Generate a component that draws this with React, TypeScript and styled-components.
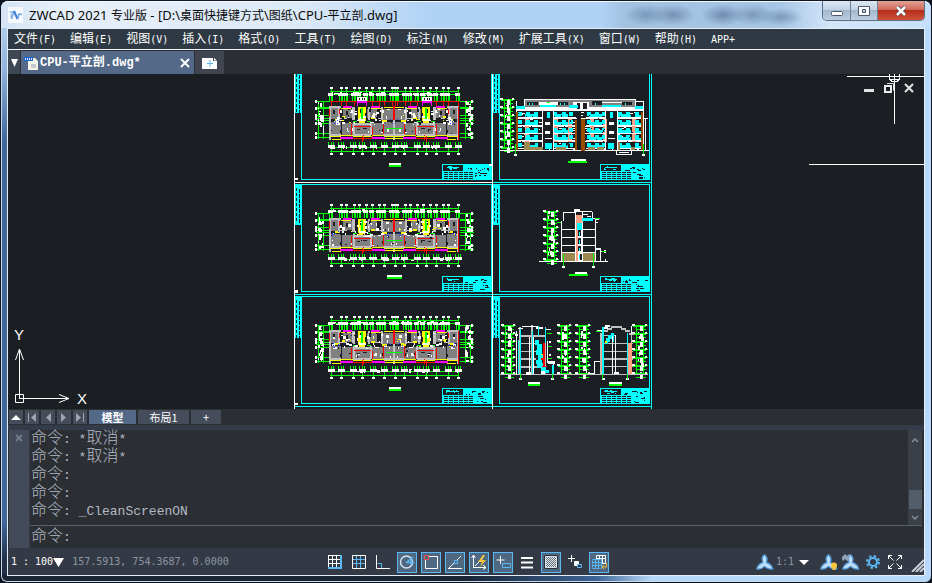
import React from "react";
import styled, { createGlobalStyle, css } from "styled-components";

/* ---------- palette ---------- */
const C = {
  canvas: "#1b1e22",
  panel: "#2b2e32",
  menu: "#2e3943",
  status: "#333a45",
  button: "#454c5a",
  active: "#536987",
  sky: "#5cb8f5",
  cyan: "#00ffff",
  green: "#00ff00",
  white: "#ffffff",
  red: "#ff0000",
  yellow: "#ffff00",
  magenta: "#ff00ff",
  blue: "#1a3cff",
  gray: "#808080",
  light: "#c0c0c0",
  brown: "#994c00",
  olive: "#9c8850",
  salmon: "#ff9f7f",
};

const cjk = `"Noto Sans CJK SC", sans-serif`;
const mono = `"DejaVu Sans Mono", ${cjk}`;

/* ---------- drawing helpers ---------- */
type Cell = [number, number, number, number];

const toPath = (cells: Cell[]) =>
  cells.map(([x, y, w, h]) => `M${x} ${y}h${w}v${h}h${-w}z`).join("");

const Fill = ({ c, cells }: { c: string; cells: Cell[] }) => (
  <path fill={c} d={toPath(cells)} />
);

const random = (seed: number) => {
  let s = seed;
  return () => {
    s = (s * 16807) % 2147483647;
    return s / 2147483647;
  };
};

const scatter = (
  seed: number,
  count: number,
  x: number,
  y: number,
  w: number,
  h: number,
  maxW = 3,
  maxH = 2
): Cell[] => {
  const r = random(seed);
  return Array.from({ length: count }, () => {
    const cw = 1 + Math.floor(r() * maxW);
    const ch = 1 + Math.floor(r() * maxH);
    return [
      x + Math.floor(r() * (w - cw + 1)),
      y + Math.floor(r() * (h - ch + 1)),
      cw,
      ch,
    ] as Cell;
  });
};

/* ---------- sheets ---------- */
const Sheet = ({
  x,
  y,
  w,
  bottom,
  stripTo,
  seed,
}: {
  x: number;
  y: number;
  w: number;
  bottom: number;
  stripTo: number;
  seed: number;
}) => {
  const right = x + w;
  const bx = right - 49;
  const by = bottom - 16;
  const holes: Cell[] = [];
  for (let i = y + 4; i < stripTo - 2; i += 5) {
    holes.push([x - 5, i, 1, 3], [x - 2, i + 1, 1, 4]);
  }
  const grid: Cell[] = [];
  for (let row = 0; row < 4; row++) {
    for (let col = 0; col < 6; col++) {
      grid.push([bx + 2 + col * 5, by + 8 + row * 2, 4, 1]);
    }
  }
  return (
    <g>
      <Fill
        c={C.cyan}
        cells={[
          [x, y, 1, bottom - y],
          [right, y, 1, bottom - y],
          [x, y, w, 1],
          [x, bottom - 1, w + 1, 1],
          [x - 6, y, 6, stripTo - y],
          [bx, by, 49, 16],
        ]}
      />
      <Fill c={C.canvas} cells={holes} />
      <Fill
        c={C.canvas}
        cells={[
          [bx + 1, by + 1, 20, 6],
          ...grid,
          ...scatter(seed, 12, bx + 23, by + 3, 25, 4, 3, 1),
          ...scatter(seed + 3, 8, bx + 33, by + 8, 14, 7, 4, 1),
        ]}
      />
      <Fill
        c={C.cyan}
        cells={[[bx + 5, by + 3, 12, 1], ...scatter(seed + 9, 9, bx + 4, by + 2, 13, 4, 3, 1)]}
      />
    </g>
  );
};

/* ---------- floor plan ---------- */
const topAxes = [
  331, 341, 346, 354, 359, 366, 372, 379, 384, 392, 395, 397, 405, 410, 417,
  423, 430, 436, 443, 448, 458,
];
const bottomAxes = [
  331, 341, 353, 362, 373, 384, 395, 404, 417, 426, 436, 448, 458,
];

const halfUnit: [string, Cell[]][] = [
  [
    C.gray,
    [
      [2, 2, 9, 11], [14, 3, 9, 9], [38, 3, 10, 9], [53, 3, 11, 11], [1, 16, 11, 12],
      [13, 17, 11, 12], [24, 19, 18, 9], [43, 17, 11, 12], [55, 16, 12, 13],
    ],
  ],
  [
    C.light,
    [
      [0, 0, 2, 34], [0, 0, 12, 2], [9, 2, 2, 13], [23, 1, 3, 14], [24, 15, 2, 15],
      [39, 1, 2, 14], [41, 15, 2, 14], [52, 1, 2, 13], [64, 0, 2, 34], [0, 28, 12, 2],
      [25, 28, 17, 2], [54, 28, 12, 2], [26, 17, 15, 2], [10, 12, 8, 1], [44, 12, 10, 1],
    ],
  ],
  [
    C.canvas,
    [
      [12, 14, 15, 2], [39, 14, 15, 2], [4, 4, 2, 4], [17, 5, 2, 4], [48, 5, 2, 5],
      [28, 23, 3, 1], [34, 22, 4, 1], [11, 24, 2, 3], [53, 23, 2, 3], [40, 3, 2, 3],
    ],
  ],
  [
    C.red,
    [
      [10, 3, 1, 5], [22, 18, 1, 13], [25, 20, 17, 1], [43, 21, 1, 10], [54, 15, 1, 13],
      [34, 29, 1, 5], [24, 32, 20, 1], [65, 0, 1, 14],
    ],
  ],
  [
    C.yellow,
    [
      [1, 30, 11, 1], [3, 33, 9, 1], [11, 29, 13, 1], [24, 30, 19, 1], [43, 29, 12, 1],
      [55, 30, 10, 1], [55, 32, 10, 1], [12, 2, 10, 1], [29, 1, 8, 14], [42, 2, 10, 1],
      [55, 1, 9, 1], [42, 11, 4, 2], [53, 14, 5, 2], [6, 13, 4, 2], [13, 10, 3, 2], [30, 15, 6, 2],
    ],
  ],
  [C.magenta, [[14, 0, 9, 2], [11, 31, 13, 2], [43, 31, 13, 2], [42, 0, 9, 2]]],
  [C.green, [[32, 2, 2, 11], [57, 22, 8, 1], [24, 15, 4, 1], [38, 15, 4, 1]]],
  [C.canvas, [[31, 3, 1, 4], [36, 7, 1, 5]]],
];

const mirror = ([x, y, w, h]: Cell): Cell => [130 - x - w, y, w, h];

const Plan = ({ y, lift, balcony, seed }: { y: number; lift: number; balcony?: boolean; seed: number }) => {
  const t = y - 15 - lift;
  const ticks = topAxes.flatMap((a) => [a - 2, a + 1]);
  const dots = [
    ...scatter(seed, 18, 3, 3, 58, 10, 3, 3),
    ...scatter(seed + 1, 20, 3, 13, 60, 6, 3, 2),
    ...scatter(seed + 4, 6, 3, 22, 60, 6, 2, 3),
    [30, 13, 6, 2] as Cell,
  ];
  const blues = [...scatter(seed + 2, 5, 2, 13, 8, 5, 1, 1), ...scatter(seed + 5, 5, 56, 13, 8, 5, 1, 1)];
  const sides = [315, 462];
  return (
    <g>
      <Fill
        c={C.green}
        cells={[
          [330, t + 4, 129, 1],
          [329, t + 7, 131, 1],
          ...topAxes.map((a): Cell => [a, t + 2, 1, 12]),
          ...ticks.map((a): Cell => [a, t + 8, 1, 6]),
          [330, y + 41, 129, 1],
          [330, y + 45, 129, 1],
          ...bottomAxes.map((a): Cell => [a, y + 36, 1, 11]),
          ...bottomAxes.flatMap((a): Cell[] => [[a - 3, y + 36, 1, 6], [a + 2, y + 36, 1, 6]]),
        ]}
      />
      <Fill
        c={C.white}
        cells={[
          ...topAxes.map((a): Cell => [a - 1, t, 3, 2]),
          ...topAxes.map((a): Cell => [a - 3, t + 6, 5, 3]),
          ...scatter(seed + 7, 30, 330, t + 5, 128, 4, 3, 2),
          ...bottomAxes.map((a): Cell => [a - 1, y + 47, 3, 2]),
          ...bottomAxes.map((a): Cell => [a - 3, y + 39, 7, 3]),
          ...scatter(seed + 8, 20, 330, y + 39, 128, 4, 3, 3),
        ]}
      />
      {sides.map((s, i) => (
        <g key={s}>
          <Fill
            c={C.green}
            cells={[
              [s + 3, y - 5, 1, 38],
              [s + 8, y - 5, 1, 38],
              ...[-5, 1, 2, 9, 12, 14, 17, 27, 31].map((d): Cell => [s + (i ? -2 : 1), y + d, 14, 1]),
            ]}
          />
          <Fill
            c={C.white}
            cells={[
              ...[-5, 2, 9, 12, 17, 27, 31].map((d): Cell => [i ? 471 : 315, y + d - 1, 2, 3]),
              ...scatter(seed + 10 + i, 22, s + 3, y - 5, 6, 37, 3, 4),
            ]}
          />
        </g>
      ))}
      {balcony && (
        <>
          <Fill c={C.red} cells={[[330, 101, 129, 1], ...topAxes.map((a): Cell => [a, 101, 1, 5])]} />
          <Fill c={C.magenta} cells={[[357, 98, 10, 8], [422, 98, 10, 8]]} />
          <Fill c={C.canvas} cells={[[358, 103, 8, 3], [423, 103, 8, 3]]} />
          <Fill c={C.white} cells={[[357, 97, 10, 4], [422, 97, 10, 4]]} />
          <Fill c={C.canvas} cells={[359, 362, 364, 424, 427, 429].map((a): Cell => [a, 98, 1, 2])} />
        </>
      )}
      <g transform={`translate(329 ${y})`}>
        {halfUnit.map(([c, cells], i) => (
          <Fill key={i} c={c} cells={[...cells, ...cells.map(mirror)]} />
        ))}
        <Fill c={C.white} cells={[...dots, ...dots.map(mirror)]} />
        <Fill c={C.canvas} cells={scatter(seed + 13, 16, 2, 2, 126, 26, 2, 2)} />
        <Fill c={C.yellow} cells={scatter(seed + 14, 9, 2, 8, 126, 9, 3, 1)} />
        <Fill c={C.blue} cells={[...blues, ...blues.map(mirror)]} />
        <Fill c={C.red} cells={[[0, 3, 1, 8], [129, 1, 1, 33], [65, 0, 1, 11], [33, 30, 1, 6], [97, 30, 1, 6]]} />
      </g>
    </g>
  );
};

const Caption = ({ x, y, w }: { x: number; y: number; w: number }) => (
  <>
    <Fill c={C.white} cells={[[x, y, w, 2]]} />
    <Fill c={C.green} cells={[[x, y + 2, w, 2]]} />
  </>
);

/* ---------- vertical dimension chain ---------- */
const Levels = ({ x, y, h, w, step, seed }: { x: number; y: number; h: number; w: number; step: number; seed: number }) => {
  const rows: number[] = [];
  for (let i = 0; i <= h; i += step) rows.push(y + i);
  return (
    <>
      <Fill
        c={C.green}
        cells={[
          [x + 4, y, 1, h],
          [x + w - 5, y, 1, h],
          ...rows.flatMap((r): Cell[] => [[x, r, w, 1], [x + 1, r + 1, w - 3, 1], [x + 4, r + 4, w - 6, 1]]),
        ]}
      />
      <Fill
        c={C.white}
        cells={[
          ...rows.map((r): Cell => [x, r - 1, 3, 2]),
          ...rows.map((r): Cell => [x + w - 3, r - 1, 2, 2]),
          ...rows.map((r): Cell => [x + Math.floor(w / 2), r + 1, 3, 5]),
          ...scatter(seed, 14, x + 5, y, w - 9, h, 2, 4),
        ]}
      />
    </>
  );
};

/* ---------- front elevation ---------- */
const Elevation = () => {
  const floors = [111, 119, 127, 134, 142];
  const bays = [518, 526, 534, 553, 562, 569, 587, 595, 602, 618, 626, 635];
  const wide = [526, 556, 590, 619];
  return (
    <g>
      <Levels x={500} y={99} h={50} w={15} step={8} seed={77} />
      <Fill c={C.gray} cells={[[524, 100, 112, 7]]} />
      <Fill
        c={C.white}
        cells={[
          [524, 99, 112, 1], [516, 101, 1, 50], [516, 107, 127, 3], [643, 101, 1, 50], [636, 101, 8, 1],
          [524, 100, 1, 8], [635, 100, 1, 8], [573, 102, 16, 6], [539, 102, 20, 3], [602, 102, 24, 1],
          [500, 150, 149, 1], [645, 119, 1, 32], [644, 118, 4, 1], [616, 150, 1, 5], [631, 150, 1, 5],
          [616, 154, 16, 1], [619, 152, 10, 1],
          ...floors.map((f): Cell => [517, f - 1, 126, 1]),
          ...scatter(61, 90, 517, 112, 125, 38, 4, 1),
        ]}
      />
      <Fill c={C.canvas} cells={[[527, 102, 11, 3], [558, 102, 10, 3], [592, 101, 10, 4], [622, 102, 10, 3], [577, 103, 3, 6], [583, 103, 4, 6]]} />
      <Fill
        c={C.canvas}
        cells={[[543, 111, 10, 38], [606, 111, 11, 38], [577, 111, 4, 38], [527, 112, 12, 2], [590, 112, 12, 2]]}
      />
      <Fill
        c={C.salmon}
        cells={[525, 554, 568, 590, 603, 632].map((x): Cell => [x, 119, 4, 23])}
      />
      <Fill
        c={C.cyan}
        cells={[
          ...floors.flatMap((f) => bays.map((b): Cell => [b, f + 1, 4, 4])),
          ...floors.flatMap((f) => wide.map((b): Cell => [b - 1, f + 3, 13, 3])),
          ...floors.map((f): Cell => [635, f + 4, 7, 2]),
          [516, 106, 9, 3], [540, 105, 16, 2], [569, 105, 9, 3], [602, 105, 19, 2], [635, 106, 8, 3],
          [547, 112, 3, 6], [610, 112, 3, 6], [545, 143, 7, 6], [608, 143, 6, 6],
          [529, 103, 1, 2], [532, 103, 1, 2], [560, 103, 1, 2], [564, 103, 1, 2], [595, 103, 1, 2], [625, 103, 1, 2],
        ]}
      />
      <Fill c={C.canvas} cells={scatter(64, 60, 517, 111, 125, 37, 1, 2)} />
      <Fill
        c={C.white}
        cells={[
          ...floors.map((f): Cell => [517, f + 6, 25, 1]),
          ...floors.map((f): Cell => [554, f + 6, 22, 1]),
          ...floors.map((f): Cell => [586, f + 6, 19, 1]),
          ...floors.map((f): Cell => [618, f + 6, 24, 1]),
          ...[122, 131].flatMap((f): Cell[] => [[545, f, 5, 3], [609, f, 5, 3]]),
          [545, 138, 7, 1], [608, 138, 7, 1], [542, 111, 1, 39], [553, 111, 1, 39], [605, 111, 1, 39], [617, 111, 1, 39],
        ]}
      />
      <Fill
        c={C.olive}
        cells={[[524, 142, 6, 8], [530, 147, 13, 3], [556, 147, 10, 3], [588, 147, 7, 3], [597, 147, 7, 3], [618, 142, 2, 8], [631, 147, 4, 3]]}
      />
      <Fill c={C.brown} cells={[[516, 112, 2, 38], [575, 120, 2, 30], [581, 119, 4, 32], [641, 112, 2, 38]]} />
      <Fill c={C.green} cells={[[515, 144, 1, 10], [643, 144, 1, 10], [547, 102, 3, 1], [568, 161, 19, 2]]} />
      <Fill c={C.white} cells={[[514, 154, 3, 2], [642, 154, 3, 2], [571, 159, 15, 2]]} />
    </g>
  );
};

/* ---------- side elevation ---------- */
const SideElevation = () => (
  <g>
    <Levels x={543} y={211} h={48} w={16} step={8} seed={21} />
    <Fill c={C.olive} cells={[[562, 253, 13, 8], [583, 253, 13, 8]]} />
    <Fill
      c={C.white}
      cells={[
        [563, 212, 12, 1], [563, 212, 1, 9], [561, 221, 1, 41], [575, 212, 1, 49], [582, 212, 1, 49],
        [595, 220, 1, 41], [592, 212, 1, 8], [574, 211, 18, 1], [574, 209, 6, 2], [583, 214, 5, 1],
        [587, 216, 4, 1], [591, 218, 4, 1], [595, 219, 4, 1], [557, 222, 5, 1], [595, 222, 3, 1],
        [561, 229, 35, 1], [561, 237, 35, 1], [561, 245, 35, 1], [561, 252, 35, 1], [539, 261, 69, 1],
        [600, 249, 1, 12], [596, 248, 5, 2], [601, 251, 5, 1], [605, 259, 1, 3], [604, 250, 2, 3],
        [577, 229, 5, 32], [562, 266, 3, 2], [592, 266, 3, 2], [575, 272, 12, 2],
      ]}
    />
    <Fill c={C.canvas} cells={[[578, 230, 3, 6], [578, 238, 3, 6], [578, 246, 3, 5], [580, 254, 2, 6]]} />
    <Fill c={C.salmon} cells={[[576, 215, 6, 8], [576, 223, 2, 38]]} />
    <Fill c={C.cyan} cells={[[577, 223, 5, 7], [582, 218, 11, 3], [579, 232, 1, 4], [579, 240, 1, 4], [579, 248, 1, 3], [579, 255, 1, 4]]} />
    <Fill c={C.green} cells={[[563, 254, 1, 12], [593, 253, 1, 13], [595, 218, 5, 1], [602, 251, 4, 1], [569, 274, 19, 2], [557, 222, 4, 1]]} />
  </g>
);

/* ---------- sections ---------- */
const Sections = () => (
  <g>
    <Levels x={501} y={325} h={49} w={15} step={8} seed={31} />
    <Levels x={557} y={325} h={49} w={15} step={8} seed={34} />
    <Levels x={575} y={325} h={49} w={16} step={8} seed={37} />
    <Levels x={632} y={325} h={49} w={16} step={8} seed={41} />
    <Fill
      c={C.light}
      cells={[
        [519, 327, 2, 48], [531, 325, 2, 50], [545, 327, 1, 48], [519, 335, 27, 2], [520, 343, 16, 1],
        [520, 351, 16, 1], [520, 358, 16, 2], [520, 366, 26, 2], [500, 374, 148, 1],
        [603, 335, 12, 1], [603, 343, 30, 1], [603, 351, 30, 1], [603, 358, 30, 2], [603, 366, 30, 1],
        [600, 333, 2, 42], [631, 331, 1, 44], [604, 330, 4, 2], [607, 328, 5, 2], [611, 326, 11, 2],
        [621, 328, 5, 2], [625, 330, 5, 2], [629, 333, 5, 2], [514, 374, 76, 1],
      ]}
    />
    <Fill
      c={C.white}
      cells={[
        [516, 331, 1, 44], [518, 328, 5, 1], [522, 326, 16, 1], [536, 327, 7, 2], [545, 329, 6, 1],
        [529, 337, 1, 37], [533, 337, 1, 37], [547, 341, 1, 22], [548, 361, 7, 3], [553, 364, 1, 10],
        [515, 334, 3, 2], [547, 333, 4, 1], [549, 341, 2, 2], [549, 354, 2, 2], [526, 372, 5, 3], [541, 371, 4, 3],
        [602, 327, 6, 2], [605, 325, 5, 2], [612, 333, 1, 41], [615, 335, 1, 39],
        [631, 326, 1, 8], [594, 361, 1, 13], [594, 361, 6, 1], [589, 373, 6, 1], [614, 372, 5, 2], [597, 330, 5, 2],
        [519, 378, 3, 2], [551, 378, 3, 2], [602, 378, 3, 2], [626, 378, 3, 2],
      ]}
    />
    <Fill
      c={C.cyan}
      cells={[
        [518, 340, 1, 34], [520, 329, 1, 45], [532, 331, 1, 43], [538, 326, 1, 10], [545, 328, 1, 15],
        [535, 340, 4, 5], [537, 344, 5, 6], [536, 350, 6, 5], [538, 355, 5, 5], [536, 360, 6, 4],
        [537, 363, 6, 5], [541, 367, 5, 4], [545, 370, 4, 3], [552, 365, 2, 9],
        [602, 327, 2, 47], [605, 341, 3, 3], [606, 338, 4, 4], [608, 335, 4, 4], [611, 333, 3, 3],
        [613, 335, 1, 7], [627, 333, 1, 41],
      ]}
    />
    <Fill c={C.salmon} cells={[[628, 343, 4, 31], [601, 342, 1, 30]]} />
    <Fill c={C.red} cells={[[543, 343, 2, 24], [542, 366, 5, 1], [541, 358, 2, 2]]} />
    <Fill c={C.yellow} cells={[[605, 341, 2, 2], [541, 354, 2, 1]]} />
    <Fill c={C.green} cells={[[520, 374, 1, 5], [552, 374, 1, 5], [602, 374, 1, 5], [627, 374, 1, 5], [547, 333, 5, 1], [548, 346, 4, 1], [548, 358, 4, 1], [596, 331, 5, 1]]} />
    <Caption x={528} y={382} w={12} />
    <Caption x={609} y={382} w={13} />
  </g>
);

const Drawing = () => (
  <DrawingSvg viewBox="290 74 370 336" shapeRendering="crispEdges" aria-label="CPU-平立剖">
    <Sheet x={301} y={70} w={190} bottom={180} stripTo={113} seed={5} />
    <Sheet x={301} y={184} w={190} bottom={292} stripTo={225} seed={15} />
    <Sheet x={301} y={296} w={190} bottom={404} stripTo={338} seed={25} />
    <Sheet x={499} y={70} w={150} bottom={180} stripTo={113} seed={35} />
    <Sheet x={499} y={184} w={150} bottom={292} stripTo={225} seed={45} />
    <Sheet x={499} y={296} w={150} bottom={404} stripTo={338} seed={55} />
    <Fill
      c={C.cyan}
      cells={[[651, 74, 1, 335], [493, 182, 159, 1], [493, 294, 159, 1], [295, 294, 197, 1], [295, 406, 357, 1]]}
    />
    <Fill
      c={C.white}
      cells={[[294, 74, 1, 336], [492, 74, 1, 336], [294, 182, 199, 1], [295, 178, 3, 2], [295, 290, 3, 3], [295, 403, 3, 2], [489, 164, 3, 2]]}
    />
    <Plan y={106} lift={4} balcony seed={101} />
    <Plan y={218} lift={-1} seed={202} />
    <Plan y={330} lift={-1} seed={303} />
    <Caption x={389} y={163} w={12} />
    <Caption x={387} y={275} w={15} />
    <Caption x={389} y={387} w={12} />
    <Elevation />
    <SideElevation />
    <Sections />
  </DrawingSvg>
);

/* ---------- page shell ---------- */
const GlobalStyle = createGlobalStyle`
  *, *::before, *::after { box-sizing: border-box; }
  body { margin: 0; background: #0c1422; }
  button, input { font: inherit; color: inherit; margin: 0; padding: 0; border: 0; background: none; }
`;

const Frame = styled.div`
  min-height: 100vh;
  display: flex;
  flex-direction: column;
  padding: 0 6px 6px;
  border: 1px solid #10161f;
  border-radius: 8px 8px 7px 7px;
  background:
    linear-gradient(90deg, #1a2535 0 50%, #3d6496 64%, #b7d9f9 70% 100%) 0 100% / 100% 8px no-repeat,
    linear-gradient(180deg, #c4dcf5 0, #8fb2dc 70px, #41679b 140px 520px, #223047 560px) 0 0 / 8px 100% no-repeat,
    #b7d9fb;
  box-shadow: inset 0 1px 0 #f4faff, inset 1px 0 0 #c5d8ec, inset 0 -1px 0 #c9dcf0;
`;

const TitleBar = styled.header`
  height: 27px;
  display: flex;
  align-items: center;
  margin: 0 -6px;
  padding: 0 0 0 7px;
  border-radius: 7px 7px 0 0;
  box-shadow: inset 0 1px 0 #f4faff;
  background:
    radial-gradient(ellipse 22px 11px at 645px 14px, #7a98ba 0, transparent 100%),
    radial-gradient(ellipse 22px 11px at 672px 14px, #7592b4 0, transparent 100%),
    radial-gradient(ellipse 22px 11px at 722px 14px, #6f8cae 0, transparent 100%),
    radial-gradient(ellipse 22px 11px at 752px 14px, #7c99ba 0, transparent 100%),
    radial-gradient(ellipse 22px 9px at 780px 16px, #7c99ba 0, transparent 100%),
    linear-gradient(90deg, #d4e4f5 0, #e6eff9 60px, #dce9f7 300px, #b0d2f5 430px, #b0d2f5 600px, #a3c1e0 625px, #a7c6e6 780px, #d3e6fa 830px, #c5e0fb 100%);
`;

const AppTitle = styled.h1`
  flex: 1;
  margin: 0 0 0 6px;
  font: 400 13px/20px "Noto Sans", ${cjk};
  color: #0a0a0a;
  white-space: nowrap;
`;

const Han = styled.span`
  font: 400 12px/20px ${cjk};
`;

const CaptionButtons = styled.div`
  display: flex;
  align-self: flex-start;
  margin-right: 6px;
  border: 1px solid #5a6d84;
  border-top: 0;
  border-radius: 0 0 5px 5px;
  overflow: hidden;
`;

const CaptionButton = styled.button<{ $close?: boolean }>`
  width: ${(p) => (p.$close ? 47 : 27)}px;
  height: 19px;
  display: grid;
  place-items: center;
  background: ${(p) =>
    p.$close
      ? "linear-gradient(#e3a293 0, #d0695a 45%, #b52e1b 50%, #cd5238 100%)"
      : "linear-gradient(#dde8f3 0, #c3d3e4 45%, #a3b7cd 50%, #bccde0 100%)"};
  & + & { border-left: 1px solid #6d8098; }
`;

const Client = styled.main`
  flex: 1;
  display: flex;
  flex-direction: column;
  border: 1px solid #e4eef8;
  background: ${C.panel};
  min-width: 0;
`;

const MenuBar = styled.nav`
  height: 21px;
  display: flex;
  align-items: center;
  gap: 14px;
  padding-left: 6px;
  background: ${C.menu};
  border-bottom: 1px solid #f2f4f5;
  color: #fff;
  font: 400 12px/20px ${cjk};
  overflow: hidden;
`;

const MenuButton = styled.button`
  white-space: nowrap;
  flex: none;
`;

const Key = styled.span`
  font: 400 10px/20px ${mono};
`;

const DocumentTabs = styled.div`
  height: 24px;
  display: flex;
  background: ${C.panel};
  color: #fff;
`;

const ListButton = styled.button`
  width: 12px;
  padding: 2px 0 0 1px;
  background: #3d4852;
  display: grid;
  place-items: center;
`;

const DocumentTab = styled.div`
  width: 173px;
  height: 23px;
  margin-top: 1px;
  margin-left: 1px;
  display: flex;
  align-items: center;
  padding: 0 4px 0 3px;
  background: ${C.active};
`;

const TabName = styled.button`
  flex: 1;
  display: flex;
  align-items: center;
  gap: 2px;
  text-align: left;
  font: 700 12px/18px "Liberation Mono", ${cjk};
  white-space: nowrap;
`;

const TabTool = styled.button`
  display: grid;
  place-items: center;
`;

const NewTab = styled.button`
  width: 29px;
  height: 23px;
  margin: 1px 0 0 1px;
  display: grid;
  place-items: center;
  background: #40454f;
`;

const Canvas = styled.section`
  position: relative;
  flex: 1;
  min-height: 335px;
  background: ${C.canvas};
  overflow: hidden;
`;

const DrawingSvg = styled.svg`
  position: absolute;
  left: 282px;
  top: 0;
  width: 370px;
  height: 336px;
`;

const Axes = styled.svg`
  position: absolute;
  left: 4px;
  bottom: 3px;
  width: 80px;
  height: 80px;
`;

const AxisLetter = styled.text`
  font: 400 15px "Liberation Sans", sans-serif;
  fill: #fff;
`;

const Crosshair = styled.svg`
  position: absolute;
  right: 0;
  top: 0;
  width: 116px;
  height: 92px;
  pointer-events: none;
`;

const ChildControls = styled.div`
  position: absolute;
  right: 9px;
  top: 8px;
  display: flex;
  gap: 8px;
`;

const LayoutTabs = styled.div`
  display: flex;
  gap: 2px;
  height: 16px;
  padding: 1px 0 1px 1px;
  background: ${C.panel};
  color: #fff;
  font: 400 11px/13px ${cjk};
`;

const NavButton = styled.button`
  width: 14px;
  background: ${C.button};
  display: grid;
  place-items: center;
`;

const LayoutTab = styled.button<{ $size: number; $active?: boolean }>`
  width: ${(p) => p.$size}px;
  background: ${(p) => (p.$active ? C.active : C.button)};
  font-weight: ${(p) => (p.$active ? 700 : 400)};
`;

const CommandPanel = styled.section`
  display: flex;
  border-top: 5px solid #333c48;
  background: ${C.panel};
  color: #b3bac6;
  font: 300 16px/18px "Liberation Mono", ${cjk};
`;

const Gutter = styled.div`
  width: 22px;
  border-left: 1px solid ${C.panel};
  border-right: 1px solid #353b44;
  background: #434a59;
  padding-top: 4px;
  display: flex;
  justify-content: center;
  align-items: flex-start;
`;

const CommandBody = styled.div`
  flex: 1;
  display: flex;
  flex-direction: column;
  margin-right: 2px;
`;

const LogRow = styled.div`
  flex: none;
  height: 95px;
  display: flex;
`;

const Log = styled.div`
  flex: 1;
  padding-left: 1px;
`;

const Line = styled.p`
  margin: 0;
  height: 18px;
  white-space: pre;
`;

const Ascii = styled.span`
  font: 400 13px/18px "Liberation Mono", monospace;
`;

const Scroll = styled.div`
  width: 14px;
  display: flex;
  flex-direction: column;
  align-items: center;
  background: #3a3f48;
`;

const ScrollButton = styled.button`
  width: 14px;
  height: 16px;
  display: grid;
  place-items: center;
  &:first-child { height: 20px; }
`;

const Thumb = styled.div`
  width: 13px;
  height: 19px;
  margin-top: auto;
  background: #535d69;
`;

const Prompt = styled.label`
  height: 23px;
  display: flex;
  align-items: center;
  border-top: 1px solid #56616a;
  padding-left: 1px;
`;

const PromptInput = styled.input`
  flex: 1;
  height: 18px;
  outline: none;
`;

const StatusBar = styled.footer`
  height: 27px;
  display: grid;
  grid-template-columns: 1fr auto 1fr;
  align-items: center;
  padding: 1px 0 0 2px;
  background: ${C.status};
  color: #fff;
  font: 400 10px/14px ${mono};
`;

const StatusGroup = styled.div<{ $end?: boolean }>`
  display: flex;
  align-items: center;
  height: 22px;
  ${(p) => (p.$end ? css`justify-content: flex-end;` : css`padding-left: 1px;`)}
`;

const ScaleButton = styled.button`
  display: flex;
  align-items: center;
  white-space: pre;
`;

const Coordinates = styled.output`
  margin-left: 8px;
  color: #8d95a3;
  white-space: pre;
`;

const Toggles = styled.div`
  display: flex;
  gap: 4px;
`;

const Toggle = styled.button<{ $on?: boolean }>`
  width: 20px;
  height: 21px;
  display: grid;
  place-items: center;
  border: 1px solid ${(p) => (p.$on ? C.sky : "transparent")};
  background: ${(p) => (p.$on ? "#4f6882" : "transparent")};
`;

const RightTool = styled.button<{ $gap?: number }>`
  display: grid;
  place-items: center;
  margin-left: ${(p) => p.$gap ?? 4}px;
`;

const RatioButton = styled.button`
  display: flex;
  align-items: center;
  gap: 5px;
  margin-left: 2px;
  color: #8d95a3;
`;

/* ---------- icons ---------- */
const Icon = ({ w = 16, h = 16, children }: { w?: number; h?: number; children: React.ReactNode }) => (
  <svg width={w} height={h} viewBox={`0 0 ${w} ${h}`} fill="none" aria-hidden="true">
    {children}
  </svg>
);

const Cross = ({ size, color, weight = 2 }: { size: number; color: string; weight?: number }) => (
  <Icon w={size} h={size}>
    <path d={`M1 1L${size - 1} ${size - 1}M${size - 1} 1L1 ${size - 1}`} stroke={color} strokeWidth={weight} />
  </Icon>
);

const AppLogo = () => (
  <Icon w={15} h={16}>
    <rect width="15" height="16" rx="1" fill="#f5f9fd" />
    <path d="M1.500 5h4L2.500 10" stroke="#8db7e8" strokeWidth="1.500" />
    <path d="M6 4L3.500 12" stroke="#8db7e8" strokeWidth="2" />
    <path d="M6 4l3.500 8" stroke="#3a7bd2" strokeWidth="2" />
    <path d="M9.500 12l1.500-5 3 .5" stroke="#69a3e4" strokeWidth="1.500" />
  </Icon>
);

const Rotor = ({ mark }: { mark?: "bulb" | "tool" }) => (
  <Icon w={18} h={18}>
    <path
      d="M8.500 1C11.500 3 12.500 6 11 9c3.500 1 6 4 6.500 7.500-4 .5-7-.5-9-2.500-2 2-4.500 3-8.500 2.500C.5 13 3 10 6.500 9 4.500 6 5.500 3 8.500 1z"
      fill="#559bdc"
    />
    <path
      d="M8.500 2.500c2 2 2 5 1 7.500 3 .8 5.300 2.800 6.500 5.500-3.200 0-5.500-1-7.500-3-2 2-4 3-7 3 1.200-2.700 3.200-4.700 6.200-5.500-1-2.500-1.200-5.500.8-7.500z"
      fill="#bfe0f8"
    />
    {mark === "bulb" && (
      <>
        <circle cx="14" cy="12.500" r="3" fill="#f8c63c" />
        <path d="M12.500 15h3v2h-3z" fill="#f8c63c" />
      </>
    )}
    {mark === "tool" && (
      <path d="M0 4l3-3 2 2 2-2 1 2-2 2 1 2-2 1-2-2-2 2-1-2z" fill="#8fa3bb" />
    )}
  </Icon>
);

const toggles: { label: string; on?: boolean; icon: React.ReactNode }[] = [
  {
    label: "捕捉",
    icon: (
      <>
        <path d="M1.500 1v13M5.500 1v13M9.500 1v13M1 1.500h13M1 5.500h13M1 9.500h13" stroke="#fff" />
        <path d="M14 1v13.500M1 14h14" stroke={C.sky} strokeWidth="2" />
      </>
    ),
  },
  {
    label: "栅格",
    icon: (
      <>
        <path d="M5.500 1v13M9.500 1v13M1 5.500h13M1 9.500h13" stroke={C.sky} />
        <path d="M1.500 1.500h13v13h-13z" stroke="#fff" />
      </>
    ),
  },
  {
    label: "正交",
    icon: (
      <>
        <path d="M2.500 9.500h4v5" stroke={C.sky} />
        <path d="M1.500 1v13.500h13.500" stroke="#fff" />
      </>
    ),
  },
  {
    label: "极轴",
    on: true,
    icon: (
      <>
        <circle cx="7.500" cy="8" r="6" stroke="#d7e4ef" strokeWidth="1.500" />
        <path d="M8 8l6-5M7 8.500h8M12 5v6" stroke={C.sky} strokeWidth="1.500" />
      </>
    ),
  },
  {
    label: "对象捕捉",
    on: true,
    icon: (
      <>
        <path d="M6 2.500h8.500v12h-12V6" stroke="#fff" />
        <path d="M1.500 1.500h4v4h-4z" stroke="#f0524a" />
      </>
    ),
  },
  {
    label: "对象追踪",
    on: true,
    icon: (
      <>
        <path d="M1 14.500h14M2 14L14 2" stroke="#fff" />
        <path d="M7.500 6.500h3v3h-3z" fill="#4f6882" stroke={C.sky} />
      </>
    ),
  },
  {
    label: "动态坐标",
    on: true,
    icon: (
      <>
        <path d="M2.500 14V2M.5 4l2-3 2 3M2 13.500h12M12 11l3 2.500-3 2M4 12l4-4" stroke="#fff" />
        <path d="M12 1L7 8h4l-2 5 6-7h-4l3-5z" fill="#f9c53c" />
      </>
    ),
  },
  {
    label: "动态输入",
    on: true,
    icon: (
      <>
        <path d="M5.500 2v8M1.500 6h8" stroke="#fff" />
        <path d="M7.500 9.500h8v4h-8z" stroke={C.sky} />
      </>
    ),
  },
  { label: "线宽", icon: <path d="M2 4h12M2 8.500h12M2 13.500h12" stroke="#fff" strokeWidth="2" /> },
  {
    label: "透明度",
    on: true,
    icon: (
      <>
        <rect x="1" y="1" width="14" height="14" rx="2" fill="#263038" />
        <rect x="2" y="2" width="12" height="12" rx="1" fill="#dfe4e8" />
        <path
          fill="#65717b"
          shapeRendering="crispEdges"
          d={toPath(
            Array.from({ length: 50 }, (_, i): Cell => {
              const row = Math.floor(i / 5);
              return [3 + (i % 5) * 2 + (row % 2), 3 + row, 1, 1];
            })
          )}
        />
      </>
    ),
  },
  {
    label: "循环选择",
    icon: (
      <>
        <path d="M4.500 1v7M1 4.500h7" stroke="#fff" />
        <path d="M7.500 7.500h4v4h-4z" stroke="#fff" fill="#fff" />
        <path d="M10.500 10.500h4v3h-4z" stroke={C.sky} fill={C.status} />
      </>
    ),
  },
  {
    label: "注释监视器",
    on: true,
    icon: (
      <>
        <path d="M5.500 1.500h9v8h-9zM8.500 1v8M11.500 1v8M5 4.500h10" stroke="#fff" />
        <path d="M1.500 5.500h9v9h-9z" fill="#4f6882" stroke={C.sky} strokeDasharray="3 1" />
        <path d="M4.500 5v10M7.500 5v10M1 8.500h10M1 11.500h10" stroke={C.sky} />
        <path d="M15.500 9v4h-4M13 11l-2 2 2 2" stroke="#f4b73a" />
      </>
    ),
  },
];

const menus: [string, string][] = [
  ["文件", "(F)"], ["编辑", "(E)"], ["视图", "(V)"], ["插入", "(I)"], ["格式", "(O)"],
  ["工具", "(T)"], ["绘图", "(D)"], ["标注", "(N)"], ["修改", "(M)"], ["扩展工具", "(X)"],
  ["窗口", "(W)"], ["帮助", "(H)"], ["", "APP+"],
];

const navs: [string, string][] = [
  ["第一个", "M2 0v9h-1V0zM9 0v9L4 4.500z"],
  ["上一个", "M8 0v9L3 4.500z"],
  ["下一个", "M2 0v9L7 4.500z"],
  ["最后一个", "M8 0v9h1V0zM1 0v9L6 4.500z"],
];

const history = ["*取消*", "*取消*", "", "", "_CleanScreenON"];

/* Splits a string into runs of Latin and Han characters. */
const runs = (text: string) => text.split(/([\x20-\x7e]+)/).filter(Boolean);
const isLatin = (run: string) => /^[\x20-\x7e]+$/.test(run);

const LogText = ({ text }: { text: string }) => (
  <span>
    {runs(text).map((run, i) => (isLatin(run) ? <Ascii key={i}>{run}</Ascii> : run))}
  </span>
);

const TitleText = ({ text }: { text: string }) => (
  <>{runs(text).map((run, i) => (isLatin(run) ? run : <Han key={i}>{run}</Han>))}</>
);

export default function App() {
  return (
    <>
      <GlobalStyle />
      <Frame>
        <TitleBar>
          <AppLogo />
          <AppTitle>
            <TitleText text={"ZWCAD 2021 专业版 - [D:\\桌面快捷键方式\\图纸\\CPU-平立剖.dwg]"} />
          </AppTitle>
          <CaptionButtons>
            <CaptionButton aria-label="最小化">
              <Icon w={14} h={12}>
                <rect x="1.500" y="6.500" width="11" height="4" rx="1" fill="#fff" stroke="#4e5a6c" />
              </Icon>
            </CaptionButton>
            <CaptionButton aria-label="最大化">
              <Icon w={14} h={12}>
                <path d="M1.500 1.500h11v9h-11z" fill="#fff" stroke="#4e5a6c" />
                <path d="M5.500 4.500h3v3h-3z" fill="#b5c6d9" stroke="#4e5a6c" />
              </Icon>
            </CaptionButton>
            <CaptionButton $close aria-label="关闭">
              <Icon w={14} h={12}>
                <path d="M3 2l8 8M11 2l-8 8" stroke="#59424a" strokeWidth="4" />
                <path d="M3 2l8 8M11 2l-8 8" stroke="#fff" strokeWidth="2.500" />
              </Icon>
            </CaptionButton>
          </CaptionButtons>
        </TitleBar>

        <Client>
          <MenuBar>
            {menus.map(([name, key]) => (
              <MenuButton key={key}>
                {name}
                <Key>{key}</Key>
              </MenuButton>
            ))}
          </MenuBar>

          <DocumentTabs>
            <ListButton aria-label="文档列表">
              <Icon w={7} h={8}>
                <path d="M0 0h7L3.500 8z" fill="#fff" />
              </Icon>
            </ListButton>
            <DocumentTab>
              <TabName>
                <Icon w={14} h={14}>
                  <path d="M4 2h7l3 3v9H4z" fill="#f3f3ea" />
                  <path d="M0 1h9v4H0z" fill="#1c63d2" />
                  <path d="M1.500 2v2M3.500 2v2M5.500 2v2M7.500 2v2" stroke="#d8e8ff" />
                  <path d="M7 8h5v4H7z" fill="#c5cbd3" />
                </Icon>
                CPU-平立剖.dwg*
              </TabName>
              <TabTool aria-label="关闭文档">
                <Cross size={10} color="#fff" />
              </TabTool>
            </DocumentTab>
            <NewTab aria-label="新建">
              <Icon w={16} h={12}>
                <path d="M0 1h11v3h4v8H0zM12 1l3 2.500h-3z" fill="#fff" />
                <path d="M8 3v7M5 6.500h6" stroke={C.sky} />
              </Icon>
            </NewTab>
          </DocumentTabs>

          <Canvas>
            <Drawing />
            <Axes viewBox="0 0 80 80">
              <path
                d="M3.500 68.500h8v8h-8zM7.500 73V23M3.500 34l4-11 4 11M7 72.500h50M47 68.500l10 4-10 4"
                fill="none"
                stroke="#fff"
              />
              <AxisLetter x="2" y="14">Y</AxisLetter>
              <AxisLetter x="65" y="78">X</AxisLetter>
            </Axes>
            <Crosshair viewBox="0 0 116 92" shapeRendering="crispEdges">
              <path d="M39 2.500h77M86.500 0v50M1 90.500h115M81.500 0v5l2 2h6l2-2V0M82 5.500h9" fill="none" stroke="#fff" />
            </Crosshair>
            <ChildControls>
              <TabTool aria-label="最小化文档">
                <Icon w={12} h={12}>
                  <path d="M1 7h10v3H1z" fill="#e4e4e4" />
                </Icon>
              </TabTool>
              <TabTool aria-label="还原文档">
                <Icon w={12} h={12}>
                  <path d="M2 4h6v6H2z" stroke="#eee" strokeWidth="2" />
                  <path d="M4 1.500h6.500v7" stroke="#ddd" />
                </Icon>
              </TabTool>
              <TabTool aria-label="关闭文档窗口">
                <Icon w={12} h={12}>
                  <path d="M2 2l8 8M10 2l-8 8" stroke="#e4e4e4" strokeWidth="2" />
                </Icon>
              </TabTool>
            </ChildControls>
          </Canvas>

          <LayoutTabs>
            <NavButton aria-label="展开">
              <Icon w={10} h={5}>
                <path d="M0 5L5 0l5 5z" fill="#fff" />
              </Icon>
            </NavButton>
            {navs.map(([label, d]) => (
              <NavButton key={label} aria-label={label}>
                <Icon w={10} h={9}>
                  <path d={d} fill="#9da5b3" />
                </Icon>
              </NavButton>
            ))}
            <LayoutTab $size={47} $active>模型</LayoutTab>
            <LayoutTab $size={51}>布局1</LayoutTab>
            <LayoutTab $size={30}>+</LayoutTab>
          </LayoutTabs>

          <CommandPanel>
            <Gutter>
              <TabTool aria-label="关闭命令行">
                <Cross size={8} color="#737b88" />
              </TabTool>
            </Gutter>
            <CommandBody>
              <LogRow>
                <Log>
                  {history.map((entry, i) => (
                    <Line key={i}>
                      <LogText text={`命令: ${entry}`} />
                    </Line>
                  ))}
                </Log>
                <Scroll>
                  <ScrollButton aria-label="向上滚动">
                    <Icon w={8} h={5}>
                      <path d="M1 4l3-3 3 3" stroke="#858c98" strokeWidth="1.500" />
                    </Icon>
                  </ScrollButton>
                  <Thumb />
                  <ScrollButton aria-label="向下滚动">
                    <Icon w={8} h={5}>
                      <path d="M1 1l3 3 3-3" stroke="#858c98" strokeWidth="1.500" />
                    </Icon>
                  </ScrollButton>
                </Scroll>
              </LogRow>
              <Prompt>
                <LogText text="命令:" />
                <PromptInput type="text" />
              </Prompt>
            </CommandBody>
          </CommandPanel>

          <StatusBar>
            <StatusGroup>
              <ScaleButton>
                1 : 100
                <Icon w={11} h={9}>
                  <path d="M0 0h11L5.500 9z" fill="#fff" />
                </Icon>
              </ScaleButton>
              <Coordinates>157.5913, 754.3687, 0.0000</Coordinates>
            </StatusGroup>
            <Toggles>
              {toggles.map((t) => (
                <Toggle key={t.label} $on={t.on} aria-label={t.label} aria-pressed={!!t.on}>
                  <Icon>{t.icon}</Icon>
                </Toggle>
              ))}
            </Toggles>
            <StatusGroup $end>
              <RightTool aria-label="注释比例">
                <Rotor />
              </RightTool>
              <RatioButton>
                1:1
                <Icon w={10} h={5}>
                  <path d="M0 0h10L5 5z" fill="#fff" />
                </Icon>
              </RatioButton>
              <RightTool $gap={11} aria-label="注释可见性">
                <Rotor mark="bulb" />
              </RightTool>
              <RightTool aria-label="自动缩放">
                <Rotor mark="tool" />
              </RightTool>
              <RightTool aria-label="设置">
                <Icon w={18} h={18}>
                  <circle cx="9" cy="9" r="6" stroke={C.sky} strokeWidth="2" strokeDasharray="2.400 2.312" />
                  <circle cx="9" cy="9" r="4" stroke={C.sky} strokeWidth="2" />
                </Icon>
              </RightTool>
              <RightTool aria-label="全屏">
                <Icon w={18} h={18}>
                  <path
                    d="M2.500 6V2.500H6M2.500 2.500l5 5M12 2.500h3.500V6M15.500 2.500l-5 5M2.500 12v3.500H6M2.500 15.500l5-5M12 15.500h3.500V12M15.500 15.500l-5-5"
                    stroke="#fff"
                  />
                </Icon>
              </RightTool>
              <RightTool $gap={7} aria-label="调整大小">
                <Icon w={13} h={20}>
                  <path d="M1 20L13 8M5 20l8-8M9 20l4-4" stroke="#c9ced6" strokeWidth="2" />
                </Icon>
              </RightTool>
            </StatusGroup>
          </StatusBar>
        </Client>
      </Frame>
    </>
  );
}
